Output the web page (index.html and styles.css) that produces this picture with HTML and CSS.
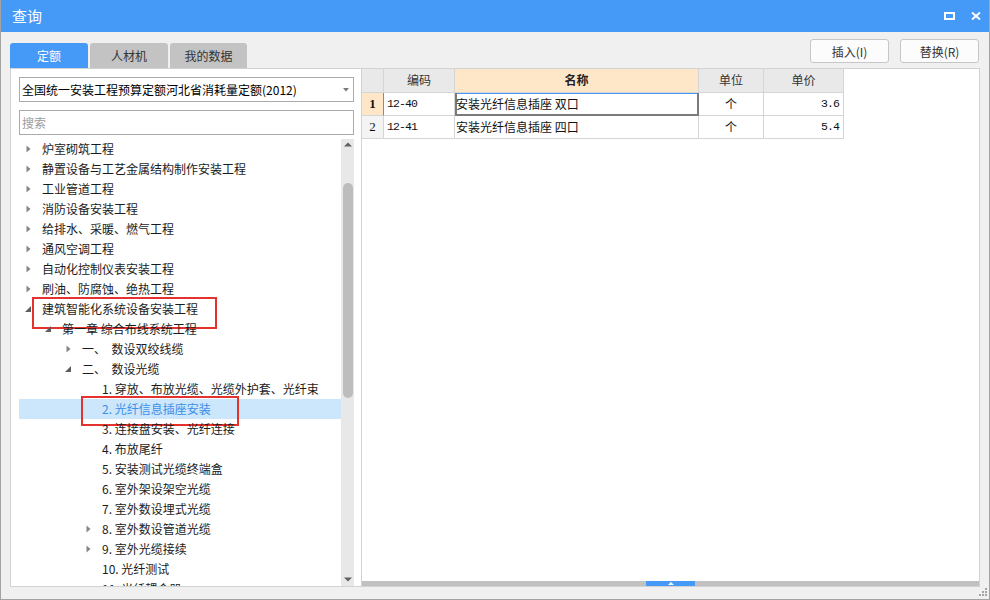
FILE: index.html
```html
<!DOCTYPE html>
<html lang="zh-CN">
<head>
    <meta charset="UTF-8">
    <title>查询</title>
    <link rel="stylesheet" href="styles.css">
</head>
<body>
<div class="window">
    <div class="titlebar">
        <span class="title">查询</span>
        <div class="title-btns">
            <svg width="11" height="8" viewBox="0 0 11 8"><rect x="1" y="1" width="9" height="6" fill="none" stroke="#fff" stroke-width="2"/></svg>
            <svg width="10" height="8" viewBox="0 0 10 8"><path d="M1 0.5 L9 7.5 M9 0.5 L1 7.5" stroke="#fff" stroke-width="2"/></svg>
        </div>
    </div>

    <div class="toolbar">
        <div class="tabs">
            <div class="tab active">定额</div>
            <div class="tab">人材机</div>
            <div class="tab">我的数据</div>
        </div>
        <div class="actions">
            <button class="btn">插入(I)</button>
            <button class="btn">替换(R)</button>
        </div>
    </div>

    <div class="main">
        <div class="left-pane">
            <div class="select">
                <span>全国统一安装工程预算定额河北省消耗量定额(2012)</span>
                <svg width="6" height="4" viewBox="0 0 6 4"><path d="M0 0 H6 L3 3.5Z" fill="#7a7a7a"/></svg>
            </div>
            <div class="search">搜索</div>
            <div class="tree-wrap">
                <ul class="tree">
                    <li class="l0"><i class="tw"><svg width="5" height="8" viewBox="0 0 5 8"><path d="M0.5 0.5 L4.5 4 L0.5 7.5Z" fill="#858585"/></svg></i><span>炉室砌筑工程</span></li>
                    <li class="l0"><i class="tw"><svg width="5" height="8" viewBox="0 0 5 8"><path d="M0.5 0.5 L4.5 4 L0.5 7.5Z" fill="#858585"/></svg></i><span>静置设备与工艺金属结构制作安装工程</span></li>
                    <li class="l0"><i class="tw"><svg width="5" height="8" viewBox="0 0 5 8"><path d="M0.5 0.5 L4.5 4 L0.5 7.5Z" fill="#858585"/></svg></i><span>工业管道工程</span></li>
                    <li class="l0"><i class="tw"><svg width="5" height="8" viewBox="0 0 5 8"><path d="M0.5 0.5 L4.5 4 L0.5 7.5Z" fill="#858585"/></svg></i><span>消防设备安装工程</span></li>
                    <li class="l0"><i class="tw"><svg width="5" height="8" viewBox="0 0 5 8"><path d="M0.5 0.5 L4.5 4 L0.5 7.5Z" fill="#858585"/></svg></i><span>给排水、采暖、燃气工程</span></li>
                    <li class="l0"><i class="tw"><svg width="5" height="8" viewBox="0 0 5 8"><path d="M0.5 0.5 L4.5 4 L0.5 7.5Z" fill="#858585"/></svg></i><span>通风空调工程</span></li>
                    <li class="l0"><i class="tw"><svg width="5" height="8" viewBox="0 0 5 8"><path d="M0.5 0.5 L4.5 4 L0.5 7.5Z" fill="#858585"/></svg></i><span>自动化控制仪表安装工程</span></li>
                    <li class="l0"><i class="tw"><svg width="5" height="8" viewBox="0 0 5 8"><path d="M0.5 0.5 L4.5 4 L0.5 7.5Z" fill="#858585"/></svg></i><span>刷油、防腐蚀、绝热工程</span></li>
                    <li class="l0 mark mark-a"><i class="tw"><svg width="6" height="6" viewBox="0 0 6 6"><path d="M6 0 V6 H0Z" fill="#5e5e5e"/></svg></i><span>建筑智能化系统设备安装工程</span></li>
                    <li class="l1"><i class="tw"><svg width="6" height="6" viewBox="0 0 6 6"><path d="M6 0 V6 H0Z" fill="#5e5e5e"/></svg></i><span>第一章 综合布线系统工程</span></li>
                    <li class="l2"><i class="tw"><svg width="5" height="8" viewBox="0 0 5 8"><path d="M0.5 0.5 L4.5 4 L0.5 7.5Z" fill="#858585"/></svg></i><span>一、&nbsp;&nbsp;数设双绞线缆</span></li>
                    <li class="l2"><i class="tw"><svg width="6" height="6" viewBox="0 0 6 6"><path d="M6 0 V6 H0Z" fill="#5e5e5e"/></svg></i><span>二、&nbsp;&nbsp;数设光缆</span></li>
                    <li class="l3"><i class="tw"></i><span>1. 穿放、布放光缆、光缆外护套、光纤束</span></li>
                    <li class="l3 selected mark mark-b"><i class="tw"></i><span>2. 光纤信息插座安装</span></li>
                    <li class="l3"><i class="tw"></i><span>3. 连接盘安装、光纤连接</span></li>
                    <li class="l3"><i class="tw"></i><span>4. 布放尾纤</span></li>
                    <li class="l3"><i class="tw"></i><span>5. 安装测试光缆终端盒</span></li>
                    <li class="l3"><i class="tw"></i><span>6. 室外架设架空光缆</span></li>
                    <li class="l3"><i class="tw"></i><span>7. 室外数设埋式光缆</span></li>
                    <li class="l3"><i class="tw"><svg width="5" height="8" viewBox="0 0 5 8"><path d="M0.5 0.5 L4.5 4 L0.5 7.5Z" fill="#858585"/></svg></i><span>8. 室外数设管道光缆</span></li>
                    <li class="l3"><i class="tw"><svg width="5" height="8" viewBox="0 0 5 8"><path d="M0.5 0.5 L4.5 4 L0.5 7.5Z" fill="#858585"/></svg></i><span>9. 室外光缆接续</span></li>
                    <li class="l3"><i class="tw"></i><span>10. 光纤测试</span></li>
                    <li class="l3"><i class="tw"></i><span>11. 光纤耦合器</span></li>
                </ul>
                <div class="vscroll">
                    <svg class="arrow-up" width="8" height="5" viewBox="0 0 8 5"><path d="M0 4.5 L4 0.5 L8 4.5Z" fill="#606060"/></svg>
                    <div class="vthumb"></div>
                    <svg class="arrow-down" width="8" height="5" viewBox="0 0 8 5"><path d="M0 0.5 L4 4.5 L8 0.5Z" fill="#606060"/></svg>
                </div>
            </div>
        </div>

        <div class="right-pane">
            <div class="grid">
                <div class="grid-row head">
                    <div class="cell num"></div>
                    <div class="cell">编码</div>
                    <div class="cell name-head">名称</div>
                    <div class="cell">单位</div>
                    <div class="cell">单价</div>
                </div>
                <div class="grid-row">
                    <div class="cell num current">1</div>
                    <div class="cell code">12-40</div>
                    <div class="cell name focus">安装光纤信息插座 双口</div>
                    <div class="cell unit">个</div>
                    <div class="cell price">3.6</div>
                </div>
                <div class="grid-row">
                    <div class="cell num">2</div>
                    <div class="cell code">12-41</div>
                    <div class="cell name">安装光纤信息插座 四口</div>
                    <div class="cell unit">个</div>
                    <div class="cell price">5.4</div>
                </div>
            </div>
            <div class="hscroll">
                <div class="hthumb"><svg width="6" height="3" viewBox="0 0 6 3"><path d="M0 3 L3 0 L6 3Z" fill="#fff"/></svg></div>
            </div>
        </div>
    </div>

    <div class="statusbar">
        <svg width="9" height="9" viewBox="0 0 9 9" fill="#a5a5a5">
            <rect x="6" y="0" width="2" height="2"/>
            <rect x="3" y="3" width="2" height="2"/><rect x="6" y="3" width="2" height="2"/>
            <rect x="0" y="6" width="2" height="2"/><rect x="3" y="6" width="2" height="2"/><rect x="6" y="6" width="2" height="2"/>
        </svg>
    </div>
</div>
</body>
</html>
```

FILE: styles.css
```css
* {
    box-sizing: border-box;
}
body {
    margin: 0;
    font-family: "Noto Sans CJK SC", "Noto Sans", sans-serif;
    color: #1b1b1b;
}
.window {
    width: 990px;
    height: 600px;
    border: 1px solid #a3a3a3;
    border-top: 0;
    background: #f0f0f0;
    display: flex;
    flex-direction: column;
    overflow: hidden;
}
.titlebar {
    height: 32px;
    flex: none;
    background: #4599f7;
    color: #fff;
    display: flex;
    align-items: center;
    justify-content: space-between;
    padding: 0 8px 0 11px;
}
.title {
    font-size: 15px;
    line-height: 20px;
}
.title-btns {
    display: flex;
    align-items: center;
    gap: 16px;
}
.title-btns svg {
    display: block;
}

/* tabs + buttons */
.toolbar {
    height: 36px;
    flex: none;
    display: flex;
    justify-content: space-between;
    padding: 0 10px 0 9px;
}
.tabs {
    display: flex;
    align-items: flex-end;
    gap: 2px;
}
.tab {
    width: 78px;
    height: 25px;
    line-height: 25px;
    text-align: center;
    font-size: 12px;
    color: #333;
    background: #c3c3c3;
    border-radius: 3px 3px 0 0;
}
.tab:last-child {
    width: 77px;
}
.tab.active {
    background: #4599f7;
    color: #fff;
}
.actions {
    display: flex;
    align-items: flex-start;
    gap: 11px;
    padding-top: 7px;
}
.btn {
    width: 79px;
    height: 24px;
    padding: 0;
    border: 1px solid #c6c6c6;
    border-radius: 3px;
    background: #fcfcfc;
    font-family: inherit;
    font-size: 12px;
    color: #333;
}

/* main area */
.main {
    flex: none;
    height: 519px;
    margin: 0 9px;
    border: 1px solid #d3d3d3;
    background: #fff;
    display: flex;
}
.left-pane {
    width: 351px;
    flex: none;
    border-right: 1px solid #d3d3d3;
    padding: 8px 7px 0 8px;
    display: flex;
    flex-direction: column;
}
.select {
    height: 25px;
    flex: none;
    border: 1px solid #ababab;
    padding: 0 4px 0 2px;
    display: flex;
    align-items: center;
    justify-content: space-between;
    font-size: 12px;
    line-height: 18px;
    color: #000;
    white-space: nowrap;
}
.select svg {
    display: block;
}
.search {
    height: 25px;
    flex: none;
    margin-top: 8px;
    border: 1px solid #ababab;
    padding-left: 2px;
    display: flex;
    align-items: center;
    font-size: 12px;
    color: #9b9b9b;
}
.tree-wrap {
    flex: 1;
    min-height: 0;
    margin-top: 4px;
    display: flex;
    overflow: hidden;
}
.tree {
    flex: 1;
    list-style: none;
    margin: 0;
    padding: 0;
}
.tree li {
    height: 20px;
    display: flex;
    align-items: center;
    font-size: 12px;
    line-height: 16px;
    white-space: nowrap;
    position: relative;
}
.tree .l0 { padding-left: 3px; }
.tree .l1 { padding-left: 23px; }
.tree .l2 { padding-left: 43px; }
.tree .l3 { padding-left: 63px; }
.tw {
    width: 12px;
    height: 20px;
    flex: none;
    display: flex;
    align-items: center;
    justify-content: center;
    margin-right: 8px;
}
.tw svg {
    display: block;
}
.tree li.selected {
    background: #cce6fb;
    color: #3d8fe8;
}

/* red annotation boxes */
.mark::after {
    content: "";
    position: absolute;
    border: 2px solid #e5322f;
}
.mark-a::after {
    left: 13px;
    top: -2px;
    width: 181px;
    height: 28px;
}
.mark-b::after {
    left: 62px;
    top: -3px;
    width: 154px;
    height: 26px;
}

.vscroll {
    width: 13px;
    flex: none;
    background: #e8e8e8;
    display: flex;
    flex-direction: column;
    align-items: center;
}
.arrow-up {
    margin-top: 3px;
}
.vthumb {
    width: 10px;
    height: 215px;
    margin-top: 36px;
    border-radius: 5px;
    background: #bdbdbd;
}
.arrow-down {
    margin-top: auto;
    margin-bottom: 4px;
}

/* grid */
.right-pane {
    flex: 1;
    display: flex;
    flex-direction: column;
}
.grid {
    flex: 1;
}
.grid-row {
    display: grid;
    grid-template-columns: 22px 71px 244px 65px 80px;
    height: 23px;
}
.grid-row.head {
    height: 24px;
}
.cell {
    border-right: 1px solid #d5d5d5;
    border-bottom: 1px solid #d5d5d5;
    font-size: 12px;
    line-height: 22px;
    padding: 0 2px;
    white-space: nowrap;
    overflow: hidden;
    color: #111;
}
.head .cell {
    background: #e9e9e9;
    text-align: center;
    color: #333;
}
.head .name-head {
    background: #fee7c9;
    font-weight: bold;
    color: #222;
}
.num {
    background: #f4f4f4;
    text-align: center;
    font-family: "Liberation Serif", serif;
    font-size: 13px;
    padding: 0;
}
.num.current {
    background: #fee7c9;
    font-weight: bold;
    border-right-color: #4599f7;
}
.code, .price {
    font-family: "Liberation Mono", monospace;
    font-size: 11.5px;
    letter-spacing: -0.9px;
}
.code {
    padding-left: 3px;
}
.name {
    padding-left: 1px;
}
.name.focus {
    border-right-color: #7b7b7b;
    border-bottom-color: #7b7b7b;
    box-shadow: inset 2px 0 #7b7b7b, inset -1px 0 #7b7b7b, inset 0 -1px #7b7b7b, inset 0 1px #4599f7;
}
.unit {
    text-align: center;
}
.price {
    text-align: right;
    padding-right: 4px;
}
.hscroll {
    height: 5px;
    flex: none;
    background: #c1c1c1;
    display: flex;
}
.hthumb {
    width: 49px;
    margin-left: 284px;
    background: #4599f7;
    display: flex;
    align-items: center;
    justify-content: center;
}
.hthumb svg {
    display: block;
}

.statusbar {
    flex: 1;
    display: flex;
    justify-content: flex-end;
    align-items: flex-end;
    padding: 0 1px 2px 0;
}
.statusbar svg {
    display: block;
}
```
